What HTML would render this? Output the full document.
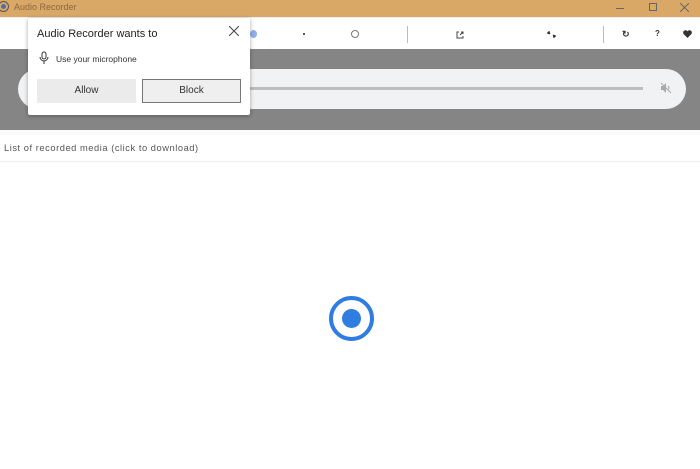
<!DOCTYPE html>
<html><head><style>
*{margin:0;padding:0;box-sizing:border-box}
body{width:700px;height:469px;overflow:hidden;background:#fff;font-family:"Liberation Sans",sans-serif;position:relative}
.a{position:absolute}
</style></head><body>
<div class="a" style="left:0;top:0;width:700px;height:17px;background:#d9a766"></div>
<div class="a" style="left:-2px;top:1px;width:11px;height:11px;border:1px solid #555;border-radius:50%"></div>
<div class="a" style="left:1px;top:4px;width:5px;height:5px;background:#4a6fb3;border-radius:50%"></div>
<div class="a" style="left:14px;top:2px;font-size:9px;color:#8a6a44">Audio Recorder</div>
<div class="a" style="left:616px;top:8px;width:8px;height:1px;background:#666"></div>
<div class="a" style="left:649px;top:3px;width:8px;height:8px;border:1px solid #666"></div>
<svg class="a" style="left:680px;top:3px" width="9" height="9"><path d="M0 0L9 9M9 0L0 9" stroke="#666" stroke-width="1"/></svg>
<div class="a" style="left:0;top:17px;width:700px;height:1px;background:#eee"></div>
<div class="a" style="left:250px;top:30px;width:7px;height:8px;background:#8fb0ea;border-radius:50%"></div>
<div class="a" style="left:303px;top:33px;width:2px;height:2px;background:#555"></div>
<div class="a" style="left:351px;top:30px;width:8px;height:8px;border:1px solid #777;border-radius:50%"></div>
<div class="a" style="left:407px;top:26px;width:1px;height:17px;background:#bbb"></div>
<svg class="a" style="left:456px;top:31px" width="8" height="8"><path d="M3 1H1V7H7V5M4 4L7 1M5 1H7V3" fill="none" stroke="#444"/></svg>
<svg class="a" style="left:547px;top:31px" width="9" height="7"><path d="M1 1L3 3M1 1h2M1 1v2M8 6L6 4M8 6H6M8 6V4" stroke="#333" stroke-width="1.3" fill="none"/></svg>
<div class="a" style="left:603px;top:26px;width:1px;height:17px;background:#bbb"></div>
<div class="a" style="left:622px;top:29px;font-size:9px;color:#333;font-weight:bold">↻</div>
<div class="a" style="left:655px;top:29px;font-size:8px;color:#333;font-weight:bold">?</div>
<svg class="a" style="left:683px;top:30px" width="9" height="8" viewBox="0 0 9 8"><path d="M4.5 8L0.6 4A2.2 2.2 0 0 1 4.5 1.2A2.2 2.2 0 0 1 8.4 4Z" fill="#333"/></svg>
<div class="a" style="left:0;top:49px;width:700px;height:81px;background:#858585"></div>
<div class="a" style="left:18px;top:69px;width:668px;height:40px;background:#f1f2f3;border-radius:20px"></div>
<div class="a" style="left:240px;top:87px;width:403px;height:3px;background:#bdbdbd"></div>
<svg class="a" style="left:660px;top:82px" width="12" height="12"><path d="M1 4H3L6 1V11L3 8H1Z" fill="#aaa"/><path d="M8 4Q10 6 8 8M1 1L11 11" stroke="#aaa" fill="none"/></svg>
<div class="a" style="left:0;top:130px;width:700px;height:5px;background:#fafafa"></div>
<div class="a" style="left:4px;top:143px;font-size:9.3px;color:#555;letter-spacing:0.55px">List of recorded media (click to download)</div>
<div class="a" style="left:0;top:161px;width:700px;height:1px;background:#eee"></div>
<div class="a" style="left:329px;top:296px;width:45px;height:45px;border:4px solid #2f7de0;border-radius:50%"></div>
<div class="a" style="left:342px;top:309px;width:19px;height:19px;background:#2f7de0;border-radius:50%"></div>
<div class="a" style="left:28px;top:18px;width:222px;height:97px;background:#fff;box-shadow:0 1px 4px rgba(0,0,0,.35);border-radius:2px"></div>
<div class="a" style="left:37px;top:28px;font-size:11px;color:#222">Audio Recorder wants to</div>
<svg class="a" style="left:229px;top:26px" width="10" height="10"><path d="M0 0L10 10M10 0L0 10" stroke="#444" stroke-width="1"/></svg>
<svg class="a" style="left:39px;top:51px" width="10" height="14" viewBox="0 0 10 14"><rect x="3" y="1" width="4" height="7" rx="2" fill="none" stroke="#333"/><path d="M1 6a4 4 0 0 0 8 0M5 10v3" fill="none" stroke="#333"/></svg>
<div class="a" style="left:56px;top:54px;font-size:8.5px;color:#333">Use your microphone</div>
<div class="a" style="left:37px;top:79px;width:99px;height:24px;background:#ebebeb;font-size:10px;color:#333;text-align:center;line-height:24px">Allow</div>
<div class="a" style="left:142px;top:79px;width:99px;height:24px;background:#efefef;border:1px solid #777;font-size:10px;color:#333;text-align:center;line-height:22px">Block</div>
</body></html>
